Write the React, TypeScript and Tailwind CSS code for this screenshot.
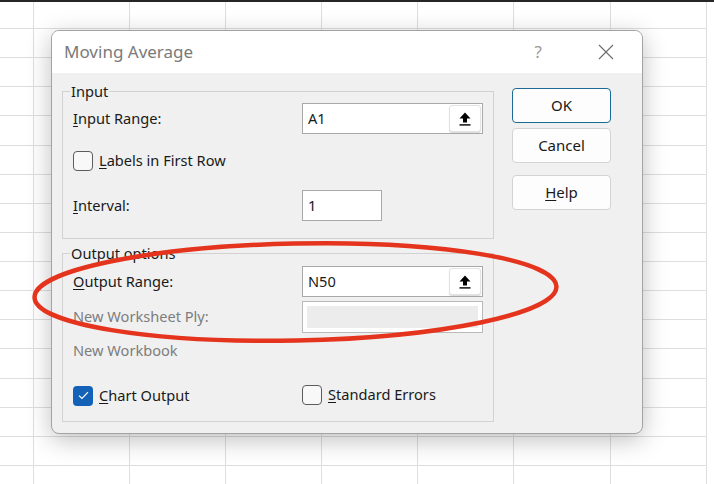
import type { ReactNode } from 'react';

const FONT = { fontFamily: '"Noto Sans", "Open Sans", sans-serif' };

function UploadIcon() {
  return (
    <svg width="12" height="14" viewBox="0 0 12 14" aria-hidden="true">
      <path d="M6 0.5 L11.5 6.5 L8 6.5 L8 10.5 L4 10.5 L4 6.5 L0.5 6.5 Z" fill="#000" />
      <rect x="0.5" y="12.2" width="11" height="1.4" fill="#000" />
    </svg>
  );
}

function RangeBox({ value }: { value: string }) {
  return (
    <div className="flex h-[31px] w-[181px] items-stretch border border-[#a9a9a9] bg-white">
      <span className="flex-1 pl-[5px] leading-[29px] text-[#1a1a1a]">{value}</span>
      <div className="m-[1px] flex w-[32px] items-center justify-center rounded-[3px] border border-[#e2e2e2] bg-white shadow-[0_1px_1px_rgba(0,0,0,0.15)]">
        <UploadIcon />
      </div>
    </div>
  );
}

function Checkbox({ checked, children }: { checked?: boolean; children: ReactNode }) {
  return (
    <div className="flex items-center">
      {checked ? (
        <span className="flex h-[20px] w-[20px] items-center justify-center rounded-[4px] bg-[#1461b8]">
          <svg width="11" height="9" viewBox="0 0 11 9" aria-hidden="true">
            <path d="M1 4.6 L4 7.5 L10 1.2" fill="none" stroke="#fff" strokeWidth="1.2" />
          </svg>
        </span>
      ) : (
        <span className="h-[20px] w-[20px] rounded-[4px] border border-[#5c5c5c] bg-[#f8f8f8]" />
      )}
      <span className="ml-[6px] text-[#1a1a1a]">{children}</span>
    </div>
  );
}

function Button({ children, primary }: { children: ReactNode; primary?: boolean }) {
  return (
    <button
      className={`h-[35px] w-[99px] rounded-[4px] border bg-[#fdfdfd] text-[15px] text-[#1a1a1a] ${
        primary ? 'border-[#1c6b95]' : 'border-[#d3d3d3]'
      }`}
    >
      {children}
    </button>
  );
}

export default function App() {
  const rows = Array.from({ length: 17 });
  const cols = Array.from({ length: 8 });

  return (
    <div className="relative h-[484px] w-[714px] overflow-hidden bg-white text-[14.6px]" style={FONT}>
      {/* spreadsheet behind the dialog */}
      <div className="h-[2px] bg-[#262626]" />
      <div className="grid grid-cols-[34px_repeat(7,96.1px)] grid-rows-[27px_repeat(16,29.13px)]">
        {rows.map((_, r) =>
          cols.map((_, c) => <div key={`${r}-${c}`} className="border-b border-r border-[#dedede]" />)
        )}
      </div>

      {/* dialog */}
      <div className="absolute left-[51px] top-[30px] flex h-[404px] w-[592px] flex-col overflow-hidden rounded-[8px] border border-[#a3a3a3] bg-[#f0f0f0] shadow-[0_6px_24px_rgba(0,0,0,0.25)]">
        <div className="flex h-[42px] items-center bg-white pl-[12px]">
          <span className="flex-1 text-[17px] text-[#7a7a7a]">Moving Average</span>
          <span className="mr-[56px] text-[17px] text-[#9a9a9a]">?</span>
          <svg width="16" height="16" viewBox="0 0 16 16" className="mr-[28px]" aria-hidden="true">
            <path d="M1 1 L15 15 M15 1 L1 15" stroke="#6b6b6b" strokeWidth="1.1" />
          </svg>
        </div>

        <div className="flex pl-[10px]">
          <div className="w-[431px]">
            {/* Input */}
            <fieldset className="mt-[8px] border border-[#d2d2d2] px-[10px] pb-[17px]">
              <legend className="ml-[-3px] h-[20px] px-[1px] leading-[20px] text-[#1a1a1a]">Input</legend>
              <div className="mt-[2px] flex h-[31px] items-center">
                <span className="w-[229px] text-[#1a1a1a]">
                  <u className="underline-offset-2">I</u>nput Range:
                </span>
                <RangeBox value="A1" />
              </div>
              <div className="mt-[16px] h-[20px]">
                <Checkbox>
                  <u className="underline-offset-2">L</u>abels in First Row
                </Checkbox>
              </div>
              <div className="mt-[20px] flex h-[31px] items-center">
                <span className="w-[229px] text-[#1a1a1a]">
                  <u className="underline-offset-2">I</u>nterval:
                </span>
                <div className="h-[31px] w-[80px] border border-[#a9a9a9] bg-white pl-[5px] leading-[29px] text-[#1a1a1a]">
                  1
                </div>
              </div>
            </fieldset>

            {/* Output options */}
            <fieldset className="mt-[4px] border border-[#d2d2d2] px-[10px] pb-[16px]">
              <legend className="ml-[-3px] h-[20px] px-[1px] leading-[20px] text-[#1a1a1a]">Output options</legend>
              <div className="mt-[3px] flex h-[31px] items-center">
                <span className="w-[229px] text-[#1a1a1a]">
                  <u className="underline-offset-2">O</u>utput Range:
                </span>
                <RangeBox value="N50" />
              </div>
              <div className="mt-[4px] flex h-[32px] items-center">
                <span className="w-[229px] text-[#7d7d7d]">New Worksheet Ply:</span>
                <div className="h-[32px] w-[181px] border border-[#b9b9b9] bg-white p-[4px]">
                  <div className="h-full bg-[#ececec]" />
                </div>
              </div>
              <div className="mt-[7px] h-[20px] leading-[20px] text-[#7d7d7d]">New Workbook</div>
              <div className="mt-[25px] flex h-[20px]">
                <div className="w-[229px]">
                  <Checkbox checked>
                    <u className="underline-offset-2">C</u>hart Output
                  </Checkbox>
                </div>
                <Checkbox>
                  <u className="underline-offset-2">S</u>tandard Errors
                </Checkbox>
              </div>
            </fieldset>
          </div>

          <div className="ml-[19px] mt-[15px] flex flex-col">
            <Button primary>OK</Button>
            <div className="mt-[5px]">
              <Button>Cancel</Button>
            </div>
            <div className="mt-[12px]">
              <Button>
                <u className="underline-offset-2">H</u>elp
              </Button>
            </div>
          </div>
        </div>
      </div>

      {/* red annotation ellipse */}
      <svg className="pointer-events-none absolute left-0 top-0" width="714" height="484" aria-hidden="true">
        <ellipse
          cx="295.5"
          cy="292"
          rx="261"
          ry="48.5"
          fill="none"
          stroke="#e5341d"
          strokeWidth="4.5"
          transform="rotate(-1.2 295.5 292)"
        />
      </svg>
    </div>
  );
}
